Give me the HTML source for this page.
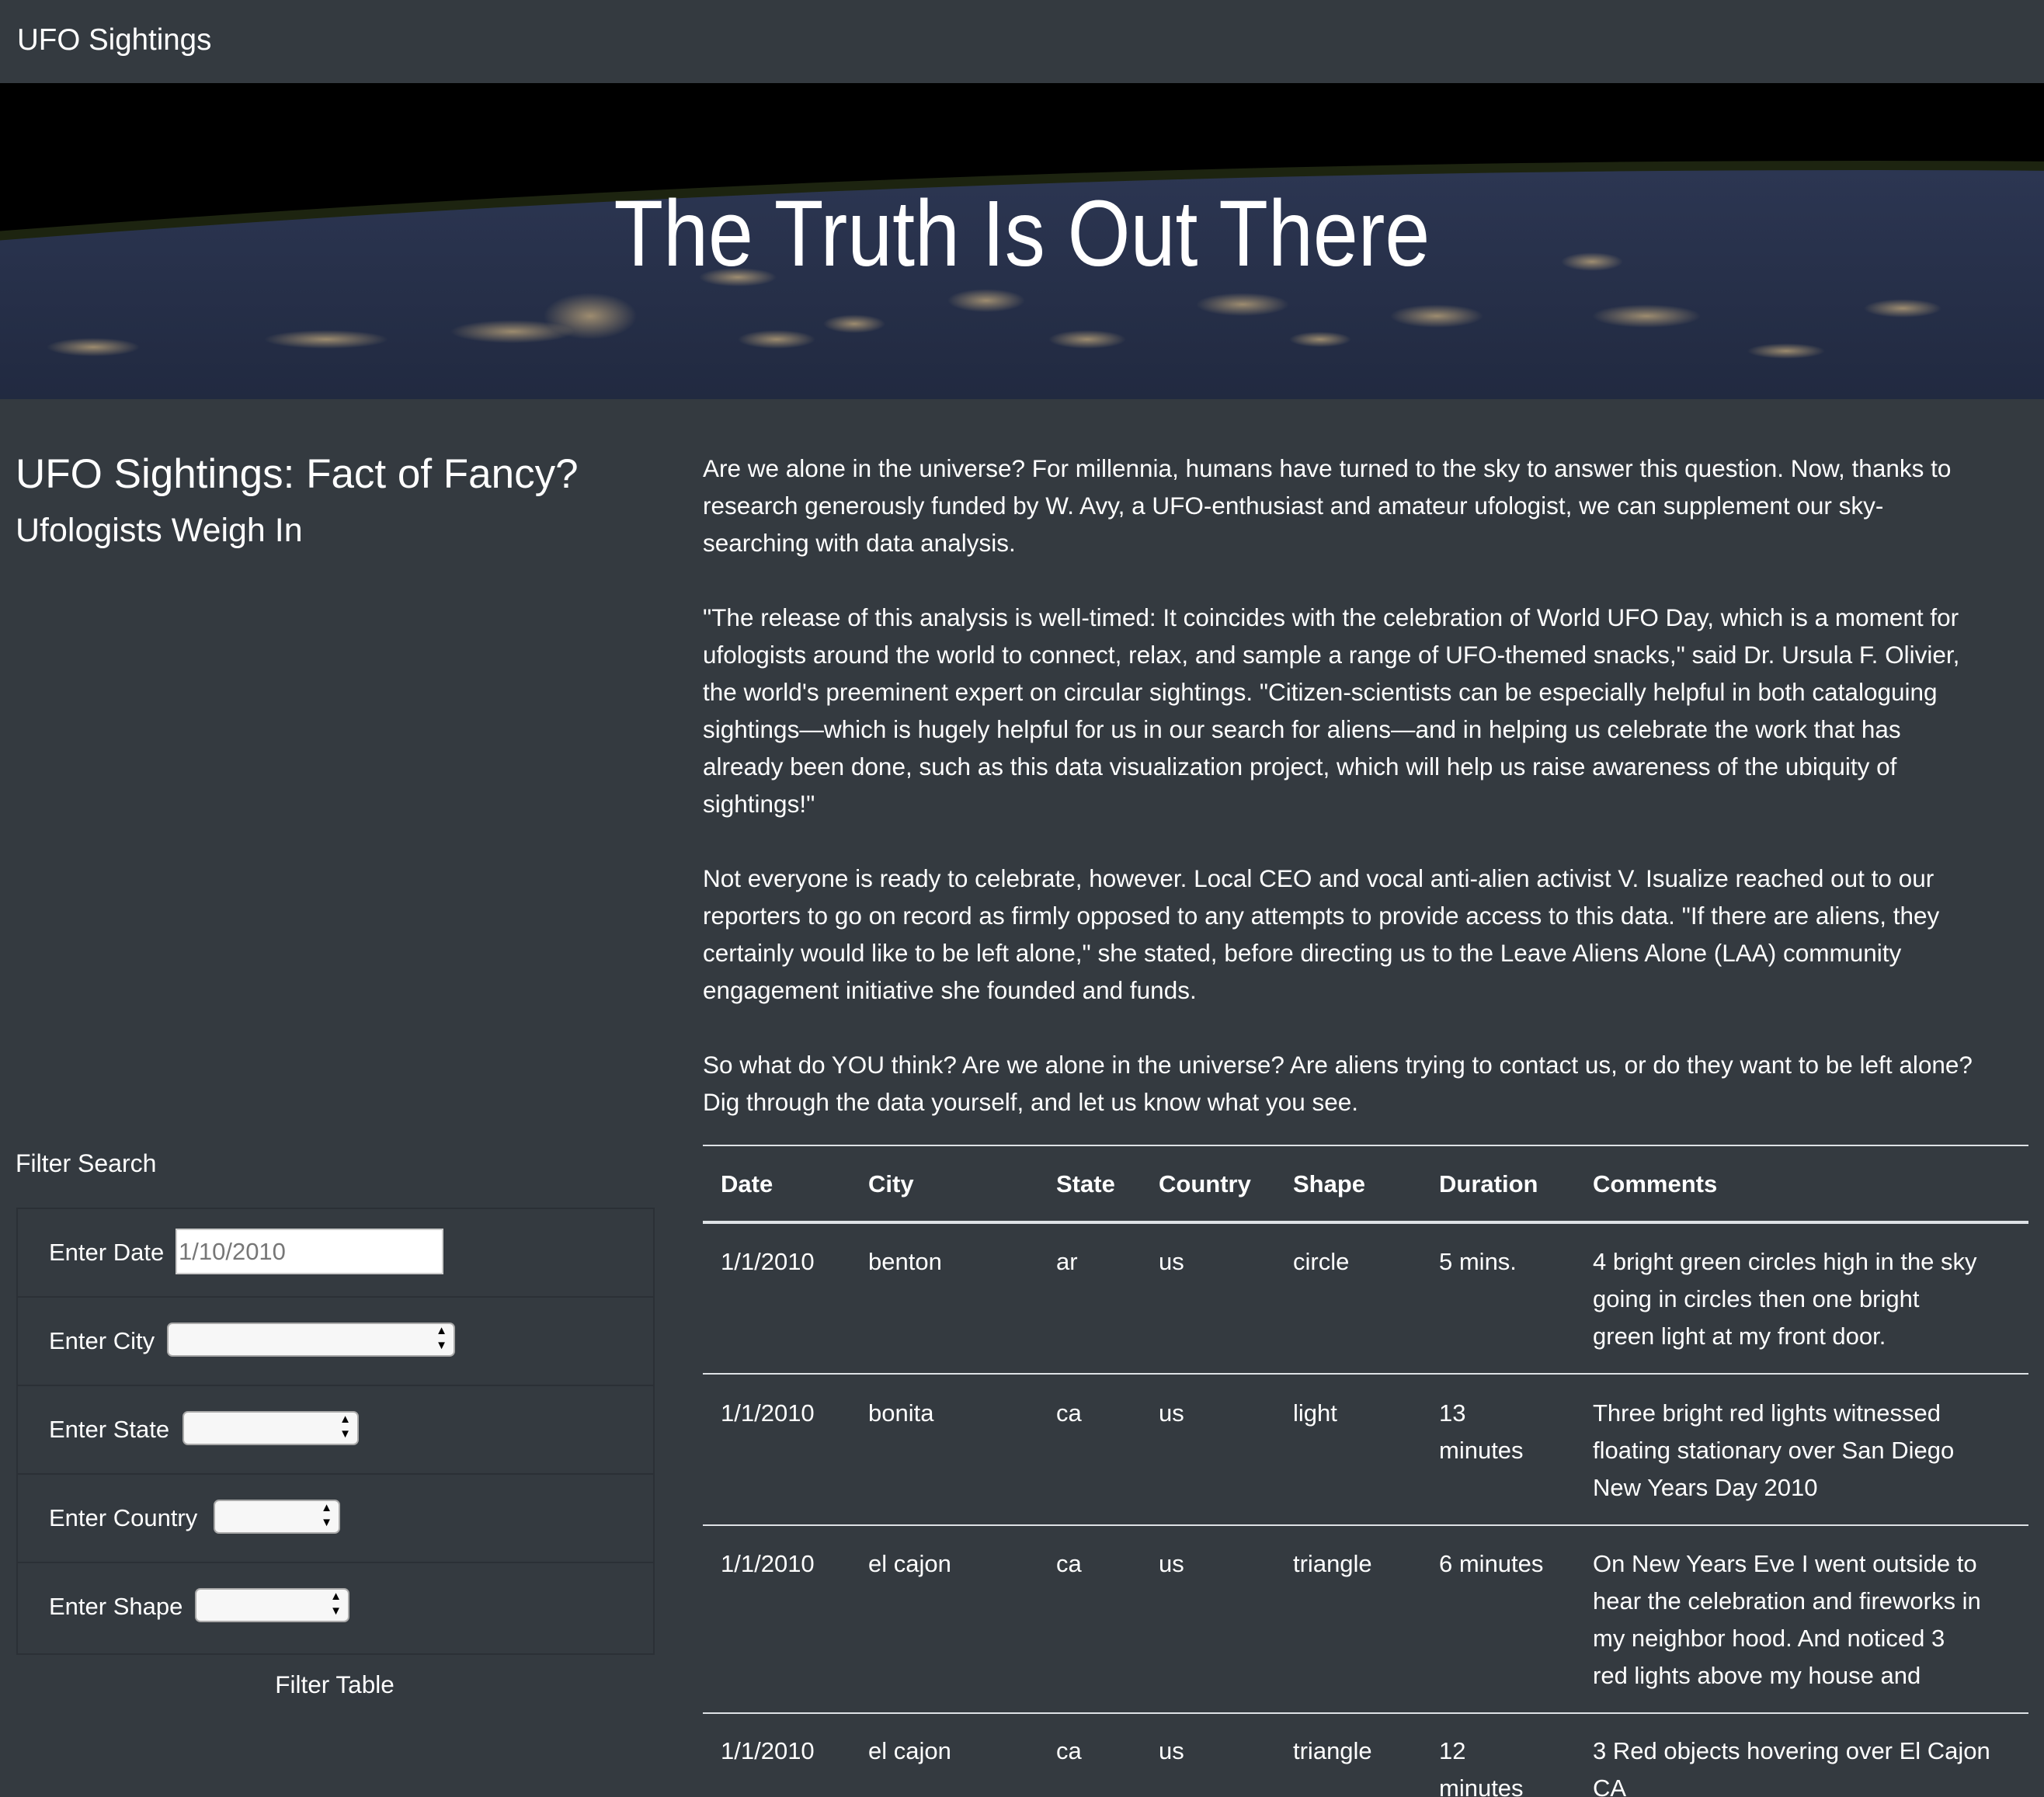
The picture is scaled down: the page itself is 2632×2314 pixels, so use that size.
<!DOCTYPE html>
<html><head><meta charset="utf-8"><style>
*{margin:0;padding:0;box-sizing:border-box}
html{width:2632px;height:2314px;overflow:hidden}
body{width:2632px;height:2314px;overflow:hidden;background:#343a40;color:#fff;font-family:"Liberation Sans",sans-serif;position:relative}
.a{position:absolute;white-space:nowrap}
.nav{position:absolute;left:0;top:0;width:2632px;height:107px;background:#343a40}
.hero{position:absolute;left:0;top:107px;width:2632px;height:407px;overflow:hidden;background:#000}
.p{position:absolute;left:905px;font-size:31.5px;line-height:48px}
.p div{white-space:nowrap}
.box{position:absolute;left:21px;top:1555px;width:822px;height:576px;border:2px solid #2b3036}
.row{position:absolute;left:0;width:818px;height:114px;border-bottom:2px solid #2b3036}
.lab{position:absolute;left:40px;font-size:31px;white-space:nowrap}
.sel{position:absolute;height:44px;background:#f7f7f7;border:2px solid #a9a9a9;border-radius:7px}
.sel:after{content:"▲";position:absolute;right:8px;top:1px;font-size:15px;color:#000;line-height:16px}
.sel:before{content:"▼";position:absolute;right:8px;top:20px;font-size:15px;color:#000;line-height:16px}
.hl{position:absolute;left:905px;width:1707px;background:#dee2e6}
.c{position:absolute;font-size:31px;line-height:48px;white-space:nowrap}
.b{font-weight:bold}
</style></head><body>
<div class="nav"><div class="a" style="left:22px;top:30px;font-size:38.5px">UFO Sightings</div></div>
<div class="hero">
<svg width="2632" height="407" style="position:absolute;left:0;top:0">
<defs>
<radialGradient id="g" cx="0.5" cy="0.5" r="0.5"><stop offset="0" stop-color="#ffd890" stop-opacity="0.55"/><stop offset="1" stop-color="#ffd890" stop-opacity="0"/></radialGradient>
<linearGradient id="e" x1="0" y1="0" x2="0" y2="1"><stop offset="0" stop-color="#2c3652"/><stop offset="0.08" stop-color="#1d253a"/><stop offset="0.15" stop-color="#121829"/></linearGradient>
</defs>
<ellipse cx="2400" cy="2600" rx="9000" ry="2500" fill="#1d2410"/>
<ellipse cx="2400" cy="2612" rx="9000" ry="2500" fill="url(#e)"/>
<g fill="url(#g)">
<ellipse cx="760" cy="300" rx="60" ry="30"/><ellipse cx="660" cy="320" rx="80" ry="15"/>
<ellipse cx="420" cy="330" rx="80" ry="12"/><ellipse cx="1270" cy="280" rx="50" ry="15"/>
<ellipse cx="1600" cy="285" rx="60" ry="15"/><ellipse cx="1850" cy="300" rx="60" ry="15"/>
<ellipse cx="2120" cy="300" rx="70" ry="15"/><ellipse cx="2050" cy="230" rx="40" ry="12"/>
<ellipse cx="2450" cy="290" rx="50" ry="12"/><ellipse cx="950" cy="250" rx="50" ry="12"/>
<ellipse cx="1100" cy="310" rx="40" ry="12"/><ellipse cx="120" cy="340" rx="60" ry="12"/>
<ellipse cx="1400" cy="330" rx="50" ry="12"/><ellipse cx="2300" cy="345" rx="50" ry="10"/>
<ellipse cx="1000" cy="330" rx="50" ry="12"/><ellipse cx="1700" cy="330" rx="40" ry="10"/>
</g>
</svg>
<div class="a" style="left:0;width:2632px;top:128px;text-align:center;font-size:121px;line-height:130px"><span style="display:inline-block;transform:scaleX(0.86)">The Truth Is Out There</span></div>
</div>
<div class="a" style="left:20px;top:580px;font-size:53px">UFO Sightings: Fact of Fancy?</div>
<div class="a" style="left:20px;top:659px;font-size:43px">Ufologists Weigh In</div>
<div class="p" style="top:579px">
<div>Are we alone in the universe? For millennia, humans have turned to the sky to answer this question. Now, thanks to</div>
<div>research generously funded by W. Avy, a UFO-enthusiast and amateur ufologist, we can supplement our sky-</div>
<div>searching with data analysis.</div>
<div>&nbsp;</div>
<div>"The release of this analysis is well-timed: It coincides with the celebration of World UFO Day, which is a moment for</div>
<div>ufologists around the world to connect, relax, and sample a range of UFO-themed snacks," said Dr. Ursula F. Olivier,</div>
<div>the world's preeminent expert on circular sightings. "Citizen-scientists can be especially helpful in both cataloguing</div>
<div>sightings—which is hugely helpful for us in our search for aliens—and in helping us celebrate the work that has</div>
<div>already been done, such as this data visualization project, which will help us raise awareness of the ubiquity of</div>
<div>sightings!"</div>
<div>&nbsp;</div>
<div>Not everyone is ready to celebrate, however. Local CEO and vocal anti-alien activist V. Isualize reached out to our</div>
<div>reporters to go on record as firmly opposed to any attempts to provide access to this data. "If there are aliens, they</div>
<div>certainly would like to be left alone," she stated, before directing us to the Leave Aliens Alone (LAA) community</div>
<div>engagement initiative she founded and funds.</div>
<div>&nbsp;</div>
<div>So what do YOU think? Are we alone in the universe? Are aliens trying to contact us, or do they want to be left alone?</div>
<div>Dig through the data yourself, and let us know what you see.</div>
</div>
<div class="a" style="left:20px;top:1480px;font-size:32px">Filter Search</div>
<div class="box">
<div class="row" style="top:0"><div class="lab" style="top:38px">Enter Date</div><div style="position:absolute;left:203px;top:25px;width:345px;height:59px;background:#fff;border:2px solid #ccc;color:#777;font-size:31px;line-height:55px;padding-left:2px">1/10/2010</div></div>
<div class="row" style="top:114px"><div class="lab" style="top:38px">Enter City</div><div class="sel" style="left:192px;top:32px;width:371px"></div></div>
<div class="row" style="top:228px"><div class="lab" style="top:38px">Enter State</div><div class="sel" style="left:212px;top:32px;width:227px"></div></div>
<div class="row" style="top:342px"><div class="lab" style="top:38px">Enter Country</div><div class="sel" style="left:252px;top:32px;width:163px"></div></div>
<div class="row" style="top:456px;border-bottom:none"><div class="lab" style="top:38px">Enter Shape</div><div class="sel" style="left:228px;top:32px;width:199px"></div></div>
</div>
<div class="a" style="left:0;width:862px;text-align:center;top:2151px;font-size:31.5px">Filter Table</div>
<div class="hl" style="top:1474px;height:2px"></div>
<div class="hl" style="top:1572px;height:4px"></div>
<div class="hl" style="top:1768px;height:2px"></div>
<div class="hl" style="top:1963px;height:2px"></div>
<div class="hl" style="top:2205px;height:2px"></div>
<div class="c b" style="left:928px;top:1501px">Date</div>
<div class="c b" style="left:1118px;top:1501px">City</div>
<div class="c b" style="left:1360px;top:1501px">State</div>
<div class="c b" style="left:1492px;top:1501px">Country</div>
<div class="c b" style="left:1665px;top:1501px">Shape</div>
<div class="c b" style="left:1853px;top:1501px">Duration</div>
<div class="c b" style="left:2051px;top:1501px">Comments</div>

<div class="c" style="left:928px;top:1601px">1/1/2010</div>
<div class="c" style="left:1118px;top:1601px">benton</div>
<div class="c" style="left:1360px;top:1601px">ar</div>
<div class="c" style="left:1492px;top:1601px">us</div>
<div class="c" style="left:1665px;top:1601px">circle</div>
<div class="c" style="left:1853px;top:1601px">5 mins.</div>
<div class="c" style="left:2051px;top:1601px">4 bright green circles high in the sky<br>going in circles then one bright<br>green light at my front door.</div>

<div class="c" style="left:928px;top:1796px">1/1/2010</div>
<div class="c" style="left:1118px;top:1796px">bonita</div>
<div class="c" style="left:1360px;top:1796px">ca</div>
<div class="c" style="left:1492px;top:1796px">us</div>
<div class="c" style="left:1665px;top:1796px">light</div>
<div class="c" style="left:1853px;top:1796px">13<br>minutes</div>
<div class="c" style="left:2051px;top:1796px">Three bright red lights witnessed<br>floating stationary over San Diego<br>New Years Day 2010</div>

<div class="c" style="left:928px;top:1990px">1/1/2010</div>
<div class="c" style="left:1118px;top:1990px">el cajon</div>
<div class="c" style="left:1360px;top:1990px">ca</div>
<div class="c" style="left:1492px;top:1990px">us</div>
<div class="c" style="left:1665px;top:1990px">triangle</div>
<div class="c" style="left:1853px;top:1990px">6 minutes</div>
<div class="c" style="left:2051px;top:1990px">On New Years Eve I went outside to<br>hear the celebration and fireworks in<br>my neighbor hood. And noticed 3<br>red lights above my house and</div>

<div class="c" style="left:928px;top:2231px">1/1/2010</div>
<div class="c" style="left:1118px;top:2231px">el cajon</div>
<div class="c" style="left:1360px;top:2231px">ca</div>
<div class="c" style="left:1492px;top:2231px">us</div>
<div class="c" style="left:1665px;top:2231px">triangle</div>
<div class="c" style="left:1853px;top:2231px">12<br>minutes</div>
<div class="c" style="left:2051px;top:2231px">3 Red objects hovering over El Cajon<br>CA</div>
</body></html>
